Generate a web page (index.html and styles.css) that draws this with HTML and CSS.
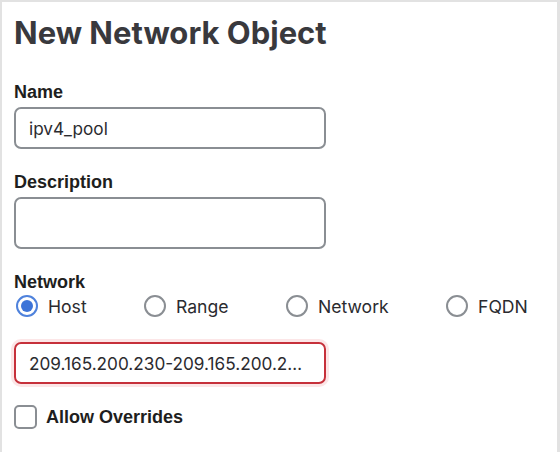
FILE: index.html
```html
<!DOCTYPE html>
<html>
<head>
<meta charset="utf-8">
<link rel="stylesheet" href="styles.css">
</head>
<body>
<div class="panel">
  <h1 class="title">New Network Object</h1>
  <div class="field">
    <label class="label">Name</label>
    <div class="input">ipv4_pool</div>
  </div>
  <div class="field">
    <label class="label">Description</label>
    <div class="input tall"></div>
  </div>
  <div class="field">
    <label class="label">Network</label>
    <div class="radios">
      <div class="radio-item r1"><span class="radio checked"></span><span class="rtext">Host</span></div>
      <div class="radio-item r2"><span class="radio"></span><span class="rtext">Range</span></div>
      <div class="radio-item r3"><span class="radio"></span><span class="rtext">Network</span></div>
      <div class="radio-item"><span class="radio"></span><span class="rtext">FQDN</span></div>
    </div>
    <div class="input error"><span class="ellipsis">209.165.200.230-209.165.200.254</span></div>
  </div>
  <div class="check-row">
    <span class="checkbox"></span>
    <span class="check-label">Allow Overrides</span>
  </div>
</div>
</body>
</html>
```
FILE: styles.css
```css
html, body {
  margin: 0;
  padding: 0;
  background: #ffffff;
}
.panel {
  box-sizing: border-box;
  width: 560px;
  height: 452px;
  border-top: 2px solid #e2e2e2;
  border-left: 2px solid #e2e2e2;
  border-right: 3px solid #e2e2e2;
  padding: 14px 12px 0 12px;
  font-family: Inter, "Noto Sans", sans-serif;
  color: #2b2b2f;
}
.title {
  margin: 0 0 32px 0;
  font-family: Inter, sans-serif;
  font-weight: 700;
  font-size: 31px;
  line-height: 34px;
  color: #39393d;
}
.field {
  margin-bottom: 23px;
}
.label {
  display: block;
  font-family: "Liberation Sans", Arial, sans-serif;
  font-weight: 700;
  font-size: 18px;
  line-height: 20px;
  color: #1e1e20;
  margin-bottom: 5px;
}
.input {
  box-sizing: border-box;
  width: 312px;
  height: 42px;
  border: 2px solid #8a8e93;
  border-radius: 7px;
  padding: 0 16px 0 13px;
  display: flex;
  align-items: center;
  font-size: 17.2px;
  color: #2b2b2f;
}
.input.tall {
  height: 52px;
}
.input.error {
  border-color: #c6303a;
  box-shadow: 0 0 0 3px #fce6e7;
  margin-top: 23px;
}
.ellipsis {
  display: block;
  min-width: 0;
  width: 100%;
  white-space: nowrap;
  overflow: hidden;
  text-overflow: ellipsis;
}
.radios {
  display: flex;
  align-items: center;
  height: 26px;
  margin-top: -4px;
  padding-left: 2px;
}
.radio-item {
  display: flex;
  align-items: center;
  font-size: 17.6px;
  color: #2b2b2f;
}
.r1 { width: 128px; }
.r2 { width: 142px; }
.r3 { width: 160px; }
.radio {
  box-sizing: border-box;
  width: 22px;
  height: 22px;
  border-radius: 50%;
  border: 2px solid #8a8e93;
  margin-right: 10px;
  position: relative;
}
.radio.checked {
  border-color: #4f82dc;
}
.radio.checked::after {
  content: "";
  position: absolute;
  left: 3px;
  top: 3px;
  width: 12px;
  height: 12px;
  border-radius: 50%;
  background: #3d74d8;
}
.check-row {
  display: flex;
  align-items: center;
  margin-top: -2px;
}
.checkbox {
  box-sizing: border-box;
  width: 23px;
  height: 24px;
  border: 2px solid #8a8e93;
  border-radius: 5px;
  margin-right: 9px;
}
.check-label {
  font-family: "Liberation Sans", Arial, sans-serif;
  font-weight: 700;
  font-size: 18px;
  color: #1e1e20;
}
```
